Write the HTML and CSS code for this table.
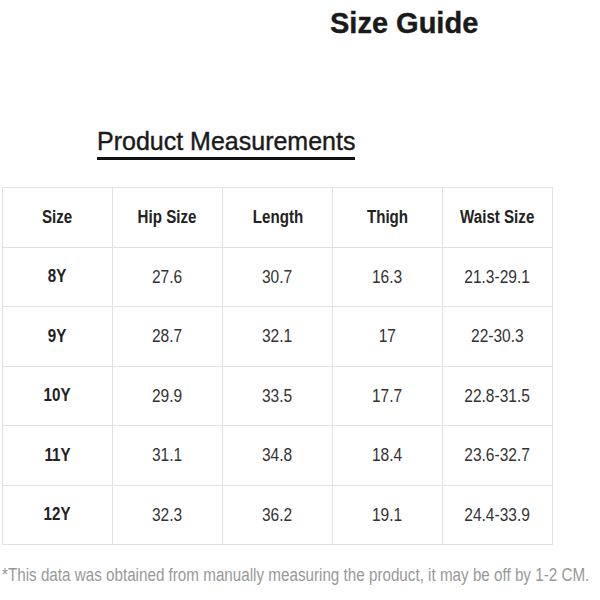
FILE: index.html
```html
<!DOCTYPE html>
<html>
<head>
<meta charset="utf-8">
<link rel="stylesheet" href="styles.css">
</head>
<body>
<div class="page">
  <h1 class="title">Size Guide</h1>
  <div class="subhead"><h2 class="subtitle">Product Measurements</h2></div>
  <table class="sizes">
    <thead>
      <tr><th><span>Size</span></th><th><span>Hip Size</span></th><th><span>Length</span></th><th><span>Thigh</span></th><th><span>Waist Size</span></th></tr>
    </thead>
    <tbody>
      <tr><th><span>8Y</span></th><td><span>27.6</span></td><td><span>30.7</span></td><td><span>16.3</span></td><td><span>21.3-29.1</span></td></tr>
      <tr><th><span>9Y</span></th><td><span>28.7</span></td><td><span>32.1</span></td><td><span>17</span></td><td><span>22-30.3</span></td></tr>
      <tr><th><span>10Y</span></th><td><span>29.9</span></td><td><span>33.5</span></td><td><span>17.7</span></td><td><span>22.8-31.5</span></td></tr>
      <tr><th><span>11Y</span></th><td><span>31.1</span></td><td><span>34.8</span></td><td><span>18.4</span></td><td><span>23.6-32.7</span></td></tr>
      <tr><th><span>12Y</span></th><td><span>32.3</span></td><td><span>36.2</span></td><td><span>19.1</span></td><td><span>24.4-33.9</span></td></tr>
    </tbody>
  </table>
  <div class="note-wrap"><p class="note">*This data was obtained from manually measuring the product, it may be off by 1-2 CM.</p></div>
</div>
</body>
</html>
```

FILE: styles.css
```css
html, body {
  margin: 0;
  padding: 0;
  background: #fff;
}
.page {
  font-family: "Liberation Sans", Arial, sans-serif;
  color: #222;
}
.title {
  margin: 0;
  padding: 6px 0 0 330px;
  font-size: 29px;
  line-height: 34px;
  font-weight: bold;
  color: #1a1a1a;
  -webkit-text-stroke: 0.4px #1a1a1a;
}
.subhead {
  margin-top: 86px;
  padding-left: 97px;
}
.subtitle {
  display: inline-block;
  margin: 0;
  font-size: 25px;
  line-height: 30px;
  font-weight: normal;
  color: #1a1a1a;
  -webkit-text-stroke: 0.4px #1a1a1a;
  padding-bottom: 1px;
  border-bottom: 3px solid #111;
}
.sizes {
  margin: 27px 0 0 2px;
  border-collapse: collapse;
  font-family: "Liberation Sans", Arial, sans-serif;
  font-size: 18px;
}
.sizes th,
.sizes td {
  width: 109px;
  height: 58.5px;
  padding: 0;
  text-align: center;
  vertical-align: middle;
  border: 1px solid #e2e2e2;
}
.sizes span {
  display: inline-block;
  white-space: nowrap;
  transform: scaleX(0.84);
}
.sizes th {
  font-weight: bold;
  color: #222;
}
.sizes td {
  font-weight: normal;
  color: #333;
  font-size: 18.5px;
}
.note-wrap {
  overflow: hidden;
}
.note {
  margin: 19px 0 0 2px;
  font-size: 18px;
  line-height: 22px;
  color: #999;
  white-space: nowrap;
  transform: scaleX(0.845);
  transform-origin: 0 0;
}
```
